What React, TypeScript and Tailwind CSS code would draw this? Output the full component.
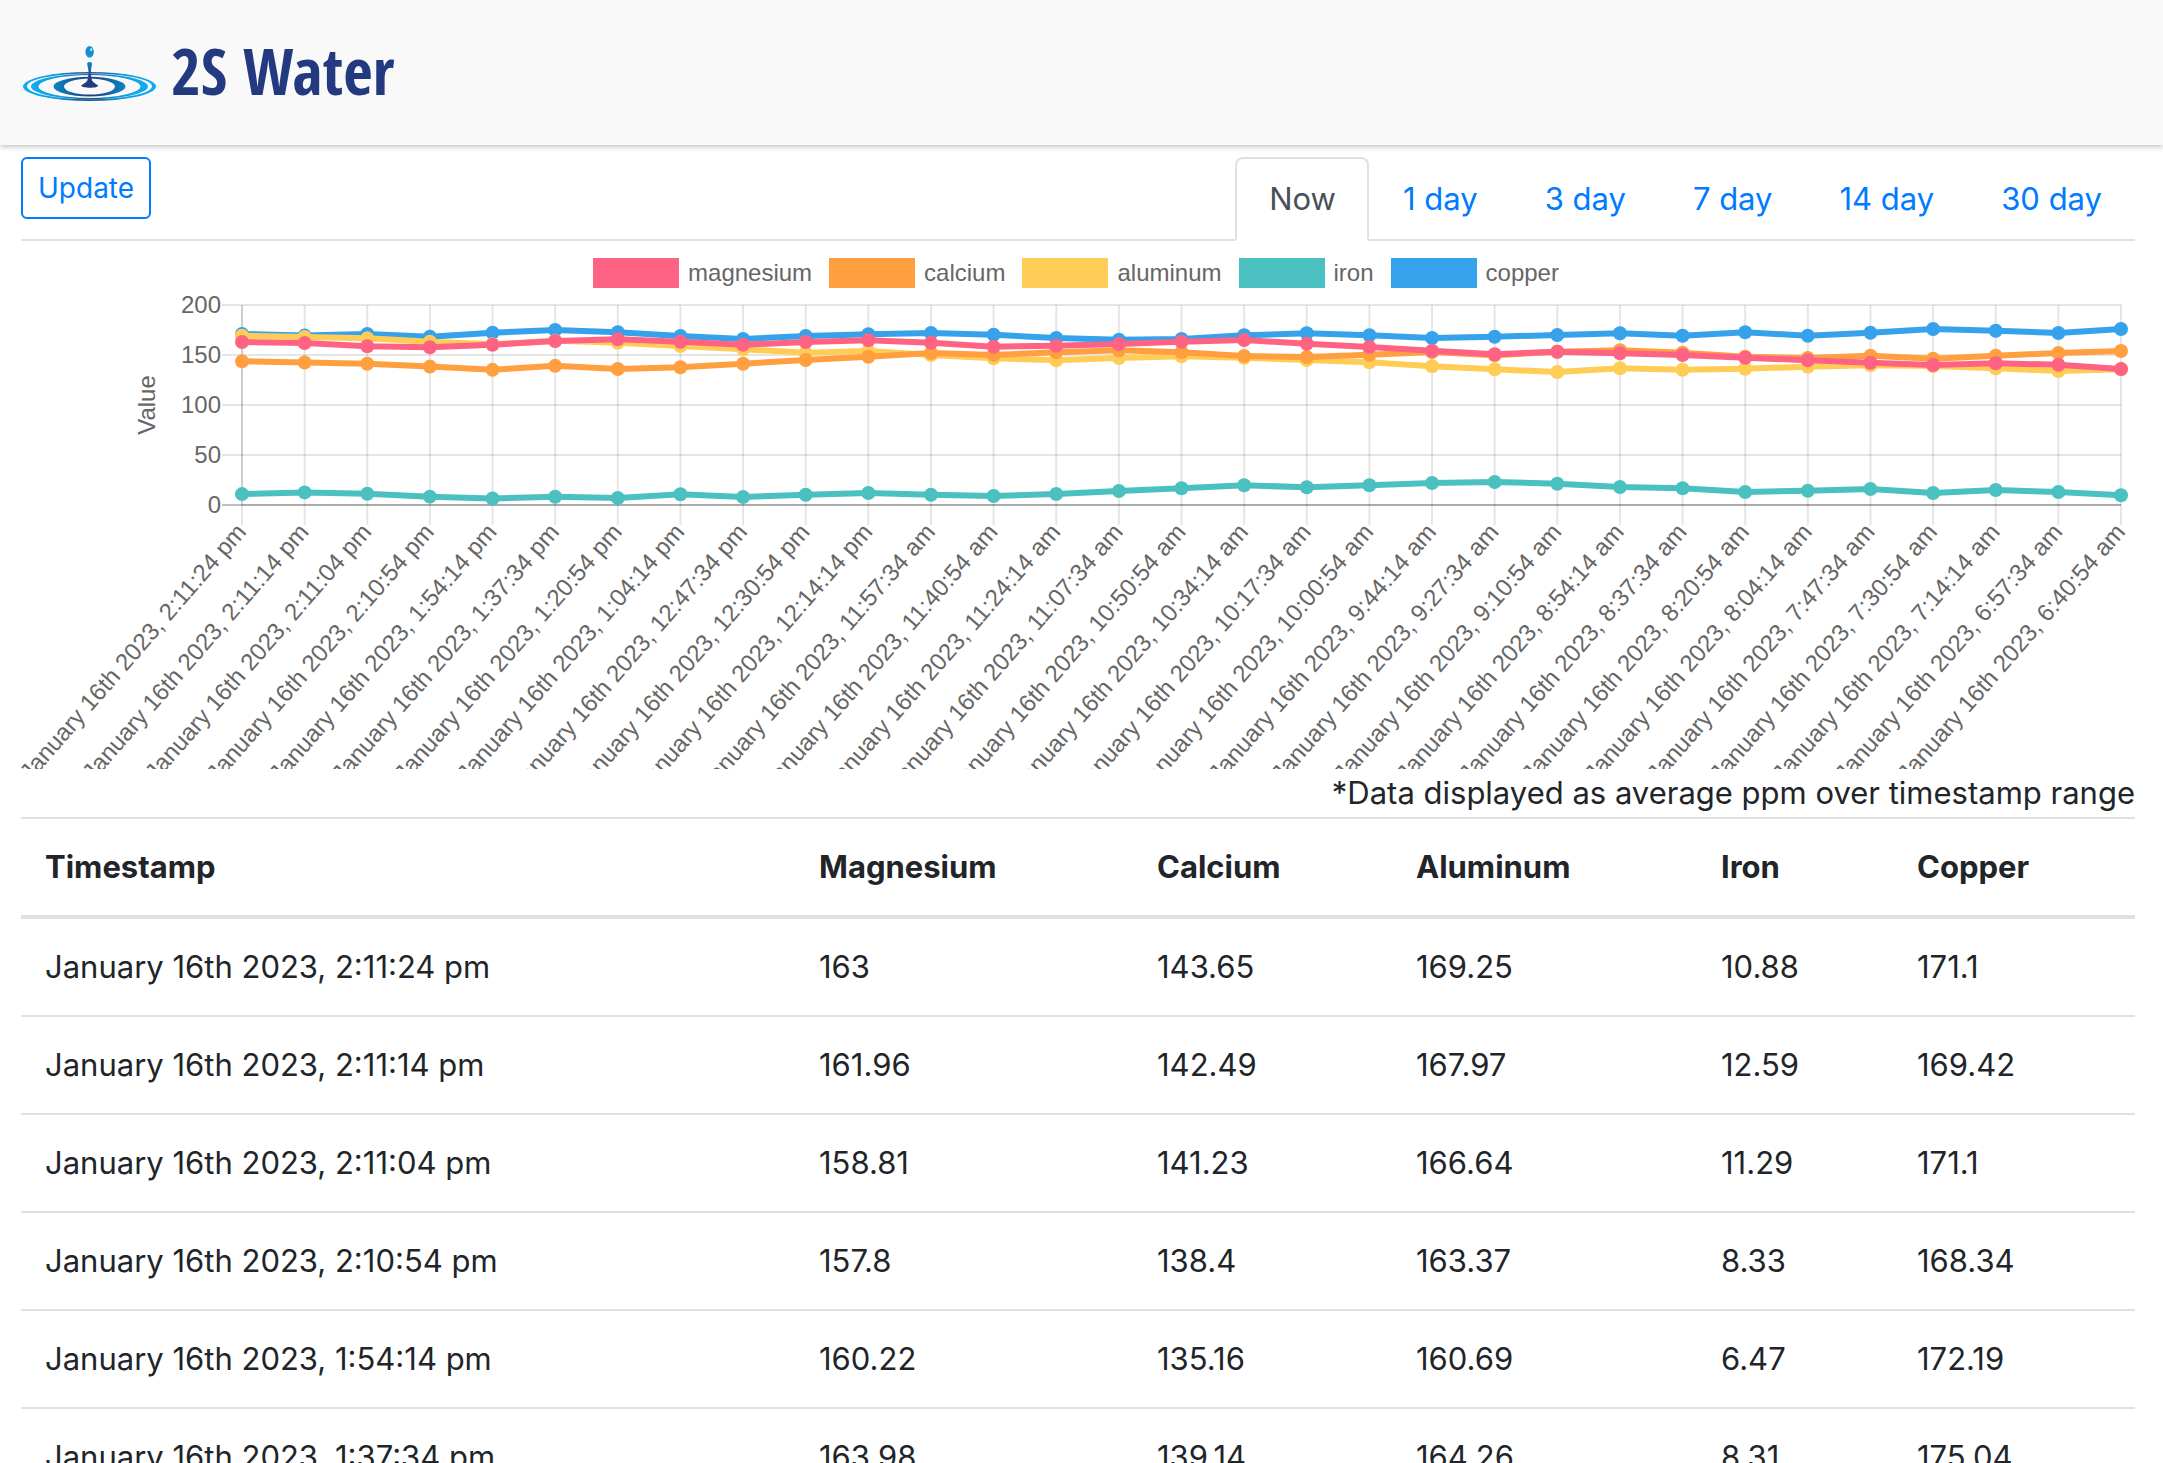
import React, { useState } from 'react';

interface Reading {
  time: string;
  magnesium: number;
  calcium: number;
  aluminum: number;
  iron: number;
  copper: number;
}

type Metal = Exclude<keyof Reading, 'time'>;

const toReading = ([time, magnesium, calcium, aluminum, iron, copper]: [string, number, number, number, number, number]): Reading => ({
  time: `January 16th 2023, ${time}`,
  magnesium,
  calcium,
  aluminum,
  iron,
  copper,
});

const rows: [string, number, number, number, number, number][] = [
  ['2:11:24 pm', 163, 143.65, 169.25, 10.88, 171.1],
  ['2:11:14 pm', 161.96, 142.49, 167.97, 12.59, 169.42],
  ['2:11:04 pm', 158.81, 141.23, 166.64, 11.29, 171.1],
  ['2:10:54 pm', 157.8, 138.4, 163.37, 8.33, 168.34],
  ['1:54:14 pm', 160.22, 135.16, 160.69, 6.47, 172.19],
  ['1:37:34 pm', 163.98, 139.14, 164.26, 8.31, 175.04],
  ['1:20:54 pm', 165.7, 136, 162.3, 7, 172.7],
  ['1:04:14 pm', 163.3, 137.7, 159, 10.7, 169],
  ['12:47:34 pm', 160.3, 141.3, 155.7, 8, 166],
  ['12:30:54 pm', 163, 145, 152.3, 10.3, 169],
  ['12:14:14 pm', 164.7, 148.3, 154, 12, 170.7],
  ['11:57:34 am', 162.3, 152, 150, 10.3, 172],
  ['11:40:54 am', 158.3, 150, 146.7, 9, 170.3],
  ['11:24:14 am', 159.3, 152.7, 144.7, 11, 167],
  ['11:07:34 am', 161, 154.7, 147, 14, 165.3],
  ['10:50:54 am', 163.3, 152.7, 148.7, 16.7, 166],
  ['10:34:14 am', 165, 149, 147.3, 19.7, 169.7],
  ['10:17:34 am', 161.3, 148, 145, 17.7, 171.7],
  ['10:00:54 am', 158, 150.3, 142.7, 19.7, 169.7],
  ['9:44:14 am', 154.3, 153, 138.7, 22, 167],
  ['9:27:34 am', 150.7, 149.7, 135.7, 23, 168.3],
  ['9:10:54 am', 153.3, 153.3, 133, 21.3, 170],
  ['8:54:14 am', 151.7, 154.7, 136.7, 18, 171.7],
  ['8:37:34 am', 150, 152.3, 135.3, 16.7, 169.3],
  ['8:20:54 am', 147.3, 148.3, 136.3, 13, 172.7],
  ['8:04:14 am', 144.7, 147, 138.3, 14.3, 169.3],
  ['7:47:34 am', 142.3, 149.3, 139.7, 16, 172.3],
  ['7:30:54 am', 140, 146.3, 139, 12, 176],
  ['7:14:14 am', 141.7, 149.3, 136.7, 15, 174.3],
  ['6:57:34 am', 140.3, 152, 134, 13, 172],
  ['6:40:54 am', 136, 154, 135.7, 9.7, 176],
];

const readings = rows.map(toReading);

const series: { key: Metal; color: string; swatch: string }[] = [
  { key: 'magnesium', color: '#ff6384', swatch: 'bg-[#ff6384]' },
  { key: 'calcium', color: '#ff9f40', swatch: 'bg-[#ff9f40]' },
  { key: 'aluminum', color: '#ffcd56', swatch: 'bg-[#ffcd56]' },
  { key: 'iron', color: '#4bc0c0', swatch: 'bg-[#4bc0c0]' },
  { key: 'copper', color: '#36a2eb', swatch: 'bg-[#36a2eb]' },
];

const columns: { key: keyof Reading; label: string; width: string }[] = [
  { key: 'time', label: 'Timestamp', width: 'w-[774px]' },
  { key: 'magnesium', label: 'Magnesium', width: 'w-[338px]' },
  { key: 'calcium', label: 'Calcium', width: 'w-[259px]' },
  { key: 'aluminum', label: 'Aluminum', width: 'w-[305px]' },
  { key: 'iron', label: 'Iron', width: 'w-[196px]' },
  { key: 'copper', label: 'Copper', width: 'w-[242px]' },
];

const ranges = ['Now', '1 day', '3 day', '7 day', '14 day', '30 day'];

const Logo = () => (
  <svg viewBox="0 0 134 56" className="w-[134px] h-14 shrink-0" aria-hidden="true">
    <defs>
      <linearGradient id="outer">
        <stop offset="0" stopColor="#12adf0" />
        <stop offset="0.25" stopColor="#0d9adb" />
        <stop offset="0.5" stopColor="#1f4f8c" />
        <stop offset="0.75" stopColor="#0d9adb" />
        <stop offset="1" stopColor="#12adf0" />
      </linearGradient>
      <linearGradient id="inner">
        <stop offset="0" stopColor="#0a86c4" />
        <stop offset="0.5" stopColor="#243a80" />
        <stop offset="1" stopColor="#0a86c4" />
      </linearGradient>
      <linearGradient id="stem" x1="0" y1="0" x2="0" y2="1">
        <stop offset="0" stopColor="#0b8acb" />
        <stop offset="0.7" stopColor="#263a80" />
      </linearGradient>
    </defs>
    <g fillRule="evenodd">
      <path
        fill="url(#outer)"
        d="M0 41.5a66.5 14.5 0 1 0 133 0a66.5 14.5 0 1 0 -133 0M4 41.3a62.5 12.9 0 1 0 125 0a62.5 12.9 0 1 0 -125 0"
      />
      <path
        fill="url(#outer)"
        d="M8 41.5a58.5 12.6 0 1 0 117 0a58.5 12.6 0 1 0 -117 0M15.5 41.5a51 11.4 0 1 0 102 0a51 11.4 0 1 0 -102 0"
      />
      <path
        fill="url(#inner)"
        d="M30.5 41.6a36 9.8 0 1 0 72 0a36 9.8 0 1 0 -72 0M41 41.6a25.5 8 0 1 0 51 0a25.5 8 0 1 0 -51 0"
      />
    </g>
    <path
      fill="url(#stem)"
      d="M64.2 18.5c0-2 4.8-2 4.8 0c0 2.5-1 4.5-1 7c0 4 .3 8 1.2 10.2c1.3 2.3 4.5 3.3 5.8 4.8c.8 3-16.8 3-16.8 0c1.3-1.5 4.7-2.5 6-4.8c.9-2.2 1.2-6.2 1.2-10.2c0-2.5-1.2-4.5-1.2-7z"
    />
    <ellipse cx="66.6" cy="6.8" rx="4.2" ry="5.8" fill="#1190d2" />
    <ellipse cx="68.2" cy="4.6" rx="1.1" ry="1.6" fill="#b9e3f7" />
  </svg>
);

const Header = () => (
  <header className="flex items-center gap-[14px] h-[145px] px-[23px] bg-[#f9f9f9] shadow-[0_1px_6px_rgba(0,0,0,0.3)]">
    <Logo />
    <h1 className="pb-1 font-['Open_Sans_Condensed','Open_Sans',sans-serif] text-[64px] leading-none font-bold text-[#243a80]">
      2S Water
    </h1>
  </header>
);

// plot area, in viewBox units
const LEFT = 221;
const RIGHT = 2100;
const TOP = 17;
const BOTTOM = 217;
const MAX = 200;

const xAt = (i: number) => LEFT + (i * (RIGHT - LEFT)) / (readings.length - 1);
const yAt = (value: number) => BOTTOM - (value / MAX) * (BOTTOM - TOP);

const Chart = () => (
  <div className="font-['Liberation_Sans',Arial,sans-serif] text-2xl text-[#666]">
    <ul className="flex flex-wrap justify-center gap-x-[17px] pt-[17px] pr-1">
      {series.map((s) => (
        <li key={s.key} className="flex items-center gap-[9px] leading-[30px]">
          <span className={`w-[86px] h-[30px] ${s.swatch}`} />
          {s.key}
        </li>
      ))}
    </ul>
    <svg viewBox="0 0 2114 481" className="block w-full h-auto" role="img" aria-label="Metal levels over time">
      {[0, 50, 100, 150, 200].map((v) => (
        <g key={v}>
          <line x1={LEFT - 20} x2={RIGHT} y1={yAt(v)} y2={yAt(v)} stroke="#000" strokeOpacity={v === 0 ? 0.25 : 0.1} strokeWidth="2" />
          <text x={LEFT - 21} y={yAt(v) + 8} textAnchor="end" fontSize="24" fill="#666">
            {v}
          </text>
        </g>
      ))}
      {readings.map((r, i) => (
        <g key={r.time}>
          <line x1={xAt(i)} x2={xAt(i)} y1={TOP} y2={BOTTOM + 20} stroke="#000" strokeOpacity="0.1" strokeWidth="2" />
          <text
            transform={`translate(${xAt(i)} ${BOTTOM + 23}) rotate(-49)`}
            y="7"
            textAnchor="end"
            fontSize="24"
            fill="#666"
          >
            {r.time}
          </text>
        </g>
      ))}
      <line x1={LEFT} x2={LEFT} y1={TOP} y2={BOTTOM} stroke="#000" strokeOpacity="0.1" strokeWidth="2" />
      <line x1={LEFT} x2={RIGHT} y1={BOTTOM} y2={BOTTOM} stroke="#000" strokeOpacity="0.1" strokeWidth="2" />
      <text transform="translate(134 117) rotate(-90)" textAnchor="middle" fontSize="24" fill="#666">
        Value
      </text>
      {/* first series goes on top */}
      {[...series].reverse().map((s) => (
        <g key={s.key} fill={s.color}>
          <polyline
            points={readings.map((r, i) => `${xAt(i)},${yAt(r[s.key])}`).join(' ')}
            fill="none"
            stroke={s.color}
            strokeWidth="6"
            strokeLinejoin="round"
          />
          {readings.map((r, i) => (
            <circle key={r.time} cx={xAt(i)} cy={yAt(r[s.key])} r="7" />
          ))}
        </g>
      ))}
    </svg>
  </div>
);

const ReadingsTable = () => (
  <table className="w-full border-collapse text-left">
    <thead>
      <tr className="border-t-2 border-b-4 border-[#dee2e6]">
        {columns.map((col) => (
          <th key={col.key} scope="col" className={`p-6 font-bold ${col.width}`}>
            {col.label}
          </th>
        ))}
      </tr>
    </thead>
    <tbody>
      {readings.map((r) => (
        <tr key={r.time} className="border-b-2 border-[#dee2e6]">
          {columns.map((col) => (
            <td key={col.key} className="p-6">
              {r[col.key]}
            </td>
          ))}
        </tr>
      ))}
    </tbody>
  </table>
);

export default function App() {
  const [range, setRange] = useState('Now');

  return (
    <div className="min-h-screen bg-white font-['Inter',sans-serif] text-[31px] leading-[48px] text-[#212529]">
      <Header />
      <main className="pt-3 pl-[21px] pr-7">
        <div className="flex items-start justify-between border-b-2 border-[#dee2e6]">
          <button
            type="button"
            className="px-[15px] py-2 border-2 border-[#007bff] rounded-md text-[28px] leading-[42px] text-[#007bff] hover:bg-[#007bff] hover:text-white"
          >
            Update
          </button>
          <nav className="flex -mb-0.5">
            {ranges.map((label) => (
              <a
                key={label}
                href="#"
                onClick={() => setRange(label)}
                className={`pl-8 pr-[31px] py-4 border-2 rounded-t-lg ${
                  range === label
                    ? 'border-[#dee2e6] border-b-white bg-white text-[#495057]'
                    : 'border-transparent text-[#007bff]'
                }`}
              >
                {label}
              </a>
            ))}
          </nav>
        </div>
        <Chart />
        <p className="text-right">*Data displayed as average ppm over timestamp range</p>
        <ReadingsTable />
      </main>
    </div>
  );
}
